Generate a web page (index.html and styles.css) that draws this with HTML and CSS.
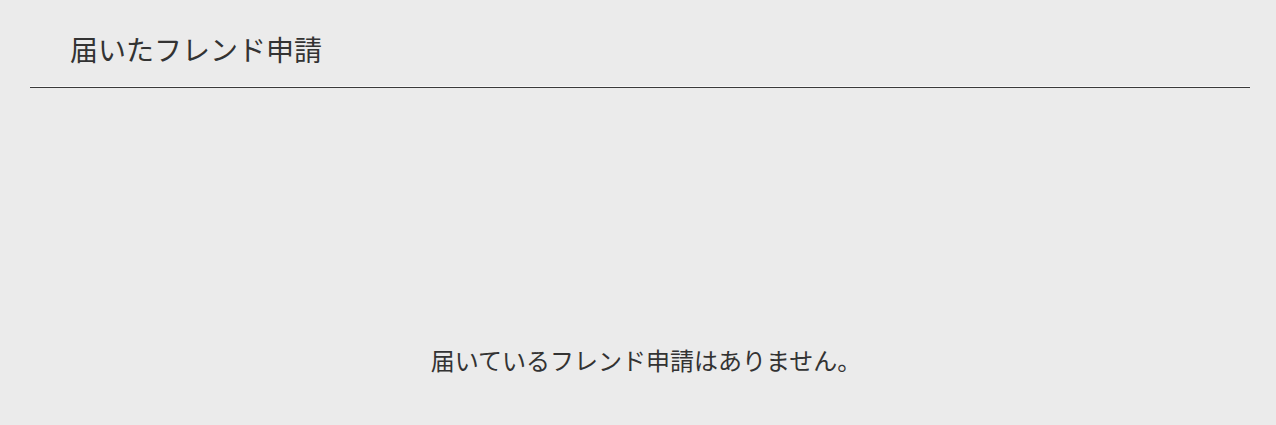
FILE: index.html
```html
<!DOCTYPE html>
<html lang="ja">
<head>
    <meta charset="UTF-8">
    <meta name="viewport" content="width=device-width, initial-scale=1.0">
    <title>届いたフレンド申請</title>
    <link rel="stylesheet" href="styles.css">
</head>
<body>
    <div class="friend-requests">
        <div class="section-header">
            <h2>届いたフレンド申請</h2>
        </div>
        <div class="request-list">
            <p class="empty-message">届いているフレンド申請はありません。</p>
        </div>
    </div>
</body>
</html>
```

FILE: styles.css
```css
:root {
    --bg: #ebebeb;
    --text: #333333;
    --rule: #3a3a3a;
}

body {
    font-family: 'Noto Sans CJK JP', 'Noto Sans', sans-serif;
    background: var(--bg);
    color: var(--text);
    margin: 0;
}

.friend-requests {
    margin: 0 26px 0 30px;
}

.section-header {
    padding: 30px 40px 18px;
    border-bottom: 1px solid var(--rule);
    /* faint highlight just above the rule */
    box-shadow: inset 0 -1px 0 rgba(255, 255, 255, 0.6);
}

.section-header h2 {
    margin: 0;
    font-size: 28px;
    font-weight: 400;
    line-height: 39px;
}

.request-list {
    display: flex;
    justify-content: center;
    padding: 255px 0 0 12px;
}

.empty-message {
    margin: 0;
    font-size: 24px;
    line-height: 34px;
}
```
